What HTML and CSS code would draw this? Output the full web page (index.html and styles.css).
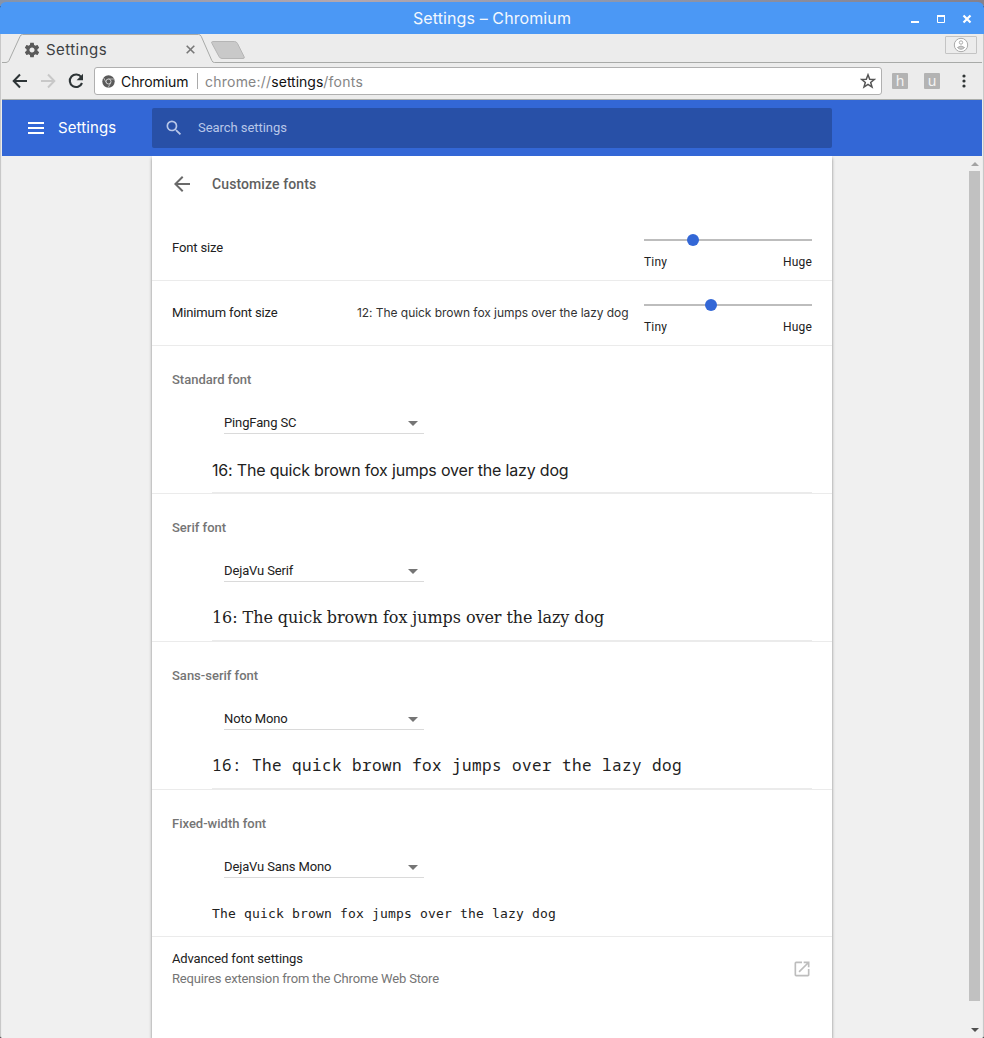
FILE: index.html
```html
<!DOCTYPE html>
<html lang="en">
<head>
<meta charset="utf-8">
<title>Settings – Chromium</title>
<link rel="stylesheet" href="styles.css">
</head>
<body>
<div class="desktop">
<div class="window">
  <div class="titlebar">
    <span class="window-title">Settings – Chromium</span>
    <svg class="window-buttons" width="76" height="32" viewBox="0 0 76 32">
      <path d="M3 20h8" stroke="#fff" stroke-width="2"/>
      <path d="M29.500 14v6.500h7V14M29 14h8" fill="none" stroke="#fff" stroke-width="1"/><path d="M29 14h8" stroke="#fff" stroke-width="2"/>
      <path d="M55.500 13.500l7 7m0-7l-7 7" stroke="#fff" stroke-width="2.200"/>
    </svg>
  </div>
  <div class="frame">
    <div class="tabstrip">
      <svg class="tab-shape" width="980" height="29" viewBox="0 0 980 29">
        <path d="M0 28.500h4q2 0 3-2L18 2.500q.7-2 2.500-2h176q2 0 2.800 2l10.500 24q.8 2 2.500 2H980" fill="none" stroke="#a8aaa8"/>
        <path d="M210.500 7.500h22q2 0 3 2l6.500 13q1 2-1 2h-21q-2 0-3-2l-7-13q-1-2 .5-2z" fill="#c9c9c9" stroke="#b5b5b5"/>
      </svg>
      <svg class="gear" width="16" height="16" viewBox="1 2 22 20"><path fill="#5a5a5a" d="M19.430 12.980c.04-.32.07-.64.07-.98s-.03-.66-.07-.98l2.110-1.650c.19-.15.24-.42.12-.64l-2-3.460c-.12-.22-.39-.3-.61-.22l-2.490 1c-.52-.4-1.080-.73-1.690-.98l-.38-2.650C14.460 2.180 14.250 2 14 2h-4c-.25 0-.46.18-.49.42l-.38 2.650c-.61.25-1.170.59-1.690.98l-2.490-1c-.23-.09-.49 0-.61.22l-2 3.460c-.13.22-.07.49.12.64l2.110 1.650c-.04.32-.07.65-.07.98s.03.66.07.98l-2.110 1.650c-.19.15-.24.42-.12.64l2 3.460c.12.22.39.3.61.22l2.490-1c.52.4 1.080.73 1.690.98l.38 2.650c.03.24.24.42.49.42h4c.25 0 .46-.18.49-.42l.38-2.650c.61-.25 1.170-.59 1.690-.98l2.490 1c.23.09.49 0 .61-.22l2-3.460c.12-.22.07-.49-.12-.64l-2.110-1.650zM12 15.500c-1.930 0-3.500-1.570-3.500-3.500s1.570-3.500 3.500-3.500 3.500 1.570 3.500 3.500-1.570 3.500-3.500 3.500z"/></svg>
      <span class="tab-title">Settings</span>
      <svg class="tab-close" width="9" height="9" viewBox="0 0 9 9"><path d="M.7.7l7.600 7.600m0-7.600L.7 8.300" stroke="#777" stroke-width="1.600"/></svg>
      <div class="profile"><svg width="16" height="16" viewBox="0 0 16 16" fill="#fff" stroke="#aaa"><circle cx="8" cy="8" r="6.700"/><circle cx="8" cy="5.500" r="1.700"/><path d="M4.500 10.500q3.500-3 7 0-3.500 3.500-7 0z" fill="#ccc"/></svg></div>
    </div>
    <div class="toolbar">
      <svg class="back" width="16" height="16" viewBox="0 0 16 16"><path d="M15 8H2M8 1.500L1.700 8 8 14.500" fill="none" stroke="#2d3436" stroke-width="2"/></svg>
      <svg class="forward" width="16" height="16" viewBox="0 0 16 16"><path d="M1 8h13M8 1.500L14.300 8 8 14.500" fill="none" stroke="#c8c8c8" stroke-width="2"/></svg>
      <svg class="reload" width="16" height="16" viewBox="0 0 16 16"><path d="M13.200 4A6.300 6.300 0 1 0 14 10" fill="none" stroke="#2d3436" stroke-width="2.100"/><path d="M15 .8v6.400H8.600z" fill="#2d3436"/></svg>
      <div class="omnibox">
        <svg class="chrome-icon" width="13" height="13" viewBox="0 0 13 13"><circle cx="6.500" cy="6.500" r="6.200" fill="#5a5a5a"/><circle cx="6.500" cy="6.500" r="2.500" fill="#5a5a5a" stroke="#ddd" stroke-width=".9"/><path d="M6.500 4h5.600M4.200 7.500L1.700 3M8.700 7.800l-2.700 5" stroke="#ccc" stroke-width=".8"/></svg>
        <span class="origin">Chromium</span>
        <span class="divider"></span>
        <span class="url">chrome://<b>settings</b>/fonts</span>
        <svg class="star" width="16" height="16" viewBox="0 0 16 16"><path d="M8 1.800l1.700 4.400 4.700.2-3.700 3 1.300 4.600L8 11.300 4 14l1.300-4.600-3.700-3 4.700-.2z" fill="none" stroke="#555" stroke-width="1.500"/></svg>
      </div>
      <span class="ext ext-h">h</span>
      <span class="ext ext-u">u</span>
      <svg class="kebab" width="4" height="14" viewBox="0 0 4 14" fill="#303535"><circle cx="2" cy="2" r="1.600"/><circle cx="2" cy="7" r="1.600"/><circle cx="2" cy="12" r="1.600"/></svg>
    </div>
    <header class="header">
      <svg class="menu" width="16" height="12" viewBox="0 0 16 12"><path d="M0 1h16M0 6h16M0 11h16" stroke="#fff" stroke-width="2"/></svg>
      <h1 class="app-title">Settings</h1>
      <div class="search">
        <svg width="20" height="20" viewBox="0 0 24 24"><path fill="#b8c7e9" d="M15.500 14h-.79l-.28-.27A6.470 6.470 0 0 0 16 9.500 6.500 6.500 0 1 0 9.500 16c1.610 0 3.090-.59 4.230-1.570l.27.28v.79l5 4.990L20.490 19l-4.990-5zm-6 0C7.010 14 5 11.990 5 9.500S7.010 5 9.500 5 14 7.010 14 9.500 11.990 14 9.500 14z"/></svg>
        <span>Search settings</span>
      </div>
    </header>
    <div class="viewport">
      <main class="card">
        <div class="subpage-head">
          <svg width="24" height="24" viewBox="0 0 24 24"><path fill="#6a6a6a" d="M20 11H7.830l5.590-5.590L12 4l-8 8 8 8 1.410-1.410L7.830 13H20v-2z"/></svg>
          <h2>Customize fonts</h2>
        </div>
        <div class="row">
          <span class="label">Font size</span>
          <div class="slider"><div class="track"><i class="knob" style="left:49px"></i></div><div class="ends"><span>Tiny</span><span>Huge</span></div></div>
        </div>
        <div class="row">
          <span class="label">Minimum font size</span>
          <span class="min-sample">12: The quick brown fox jumps over the lazy dog</span>
          <div class="slider"><div class="track"><i class="knob" style="left:67px"></i></div><div class="ends"><span>Tiny</span><span>Huge</span></div></div>
        </div>
        <section class="font">
          <h3>Standard font</h3>
          <div class="select"><span>PingFang SC</span><i class="caret"></i></div>
          <div class="sample standard"><span>16: The quick brown fox jumps over the lazy dog</span></div>
        </section>
        <section class="font">
          <h3>Serif font</h3>
          <div class="select"><span>DejaVu Serif</span><i class="caret"></i></div>
          <div class="sample serif"><span>16: The quick brown fox jumps over the lazy dog</span></div>
        </section>
        <section class="font">
          <h3>Sans-serif font</h3>
          <div class="select"><span>Noto Mono</span><i class="caret"></i></div>
          <div class="sample sans"><span>16: The quick brown fox jumps over the lazy dog</span></div>
        </section>
        <section class="font last">
          <h3>Fixed-width font</h3>
          <div class="select"><span>DejaVu Sans Mono</span><i class="caret"></i></div>
          <div class="sample fixed"><span>The quick brown fox jumps over the lazy dog</span></div>
        </section>
        <div class="advanced">
          <div><div>Advanced font settings</div><div class="secondary">Requires extension from the Chrome Web Store</div></div>
          <svg width="20" height="20" viewBox="0 0 24 24"><path fill="#bdbdbd" d="M19 19H5V5h7V3H5a2 2 0 0 0-2 2v14a2 2 0 0 0 2 2h14c1.100 0 2-.9 2-2v-7h-2v7zM14 3v2h3.590l-9.830 9.830 1.410 1.410L19 6.410V10h2V3h-7z"/></svg>
        </div>
      </main>
      <div class="scrollbar"><i class="up"></i><i class="thumb"></i><i class="down"></i></div>
    </div>
  </div>
</div>
</div>
</body>
</html>
```

FILE: styles.css
```css
* { box-sizing: border-box; }
body { margin: 0; font: 13px/20px Roboto, sans-serif; color: #212121; overflow: hidden; }
h1, h2, h3 { margin: 0; font-weight: 500; }
svg, i { display: block; flex: none; }
span { white-space: nowrap; }

.desktop { height: 1038px; padding-top: 2px; background: linear-gradient(90deg, #8593aa, #b5a7ad 35%, #8f98ae 60%, #85818d) top / 100% 6px no-repeat, #111; }
.window { height: 1036px; display: flex; flex-direction: column; }
.titlebar { height: 32px; background: #4b98f5; border-radius: 6px 6px 0 0; display: flex; align-items: center; padding-left: 413px; justify-content: space-between; }
.window-title { font: 16px/32px Inter, sans-serif; color: #fff; opacity: .93; letter-spacing: .1px; }
.frame { flex: 1; min-height: 0; background: #ececec; border: solid #c8c8c8; border-width: 0 1px; border-radius: 0 0 2px 2px; padding: 0 1px; display: flex; flex-direction: column; }

.tabstrip { height: 29px; position: relative; display: flex; align-items: center; padding: 2px 5px 0 22px; }
.tab-shape { position: absolute; left: 0; top: 0; }
.tab-title { margin-left: 6px; width: 138px; font: 15px/20px Inter, sans-serif; color: #3c4043; letter-spacing: .45px; }
.tab-close { margin-left: 2px; }
.profile { margin-left: auto; margin-top: -10px; width: 32px; height: 18px; border: 1px solid #c4c4c4; border-radius: 1px; display: flex; align-items: center; justify-content: center; }

.toolbar { height: 37px; border-bottom: 1px solid #aaadaa; display: flex; align-items: center; padding: 0 16px 0 10px; }
.forward, .reload { margin-left: 12px; }
.omnibox { margin-left: 10px; width: 788px; height: 28px; border: 1px solid #b0b0b0; border-radius: 3px; background: #fff; display: flex; align-items: center; padding: 0 5px 0 7px; font: 14px/20px Inter, sans-serif; }
.origin { margin-left: 6px; padding-top: 2px; width: 67px; color: #111; letter-spacing: -.1px; }
.divider { width: 1px; height: 16px; margin: 0 7px 0 9px; background: #aaa; }
.url { padding-top: 2px; color: #858585; letter-spacing: .23px; }
.url b { font-weight: 400; color: #111; letter-spacing: 0; }
.star { margin-left: auto; }
.ext { width: 16px; height: 16px; border-radius: 1px; background: #b3b3b3; color: #f3f3f3; font: 14px/16px "Noto Sans", sans-serif; text-align: center; }
.ext-h { margin-left: 10px; }
.ext-u { margin-left: 16px; }
.kebab { margin-left: auto; }

.header { height: 56px; background: #3367d6; display: flex; align-items: center; padding-left: 26px; }
.app-title { margin-left: 14px; width: 94px; font: 15px/20px Inter, sans-serif; color: #fff; letter-spacing: .1px; }
.search { width: 680px; height: 40px; border-radius: 2px; background: #2850a7; color: #b8c7e9; display: flex; align-items: center; gap: 14px; padding-left: 12px; letter-spacing: -.05px; }

.viewport { flex: 1; min-height: 0; background: #f0f0f0; display: flex; justify-content: space-between; padding-left: 150px; }
.card { width: 680px; background: #fff; box-shadow: 0 2px 3px rgba(0,0,0,.45); clip-path: inset(0 -8px 0 -8px); letter-spacing: -.13px; }
.subpage-head { height: 56px; padding-left: 18px; display: flex; align-items: center; gap: 18px; }
.subpage-head h2 { font-size: 14px; color: #5f5f5f; letter-spacing: .1px; }
.row { height: 65px; padding: 0 20px; display: flex; align-items: center; border-bottom: 1px solid #ebebeb; }
.subpage-head + .row { height: 69px; padding-top: 4px; }
.label { width: 105px; }
.slider { width: 168px; margin-left: auto; padding-top: 14px; }
.track { height: 2px; margin-bottom: 11px; background: #bdbdbd; position: relative; }
.knob { position: absolute; top: -5px; margin-left: -6px; width: 12px; height: 12px; border-radius: 50%; background: #3367d6; }
.ends { display: flex; justify-content: space-between; font-size: 12px; letter-spacing: .15px; }
.min-sample { margin-left: 80px; font: 12px/20px Inter, sans-serif; color: #333; letter-spacing: -.05px; }
.font { height: 148px; padding: 24px 20px 0; border-bottom: 1px solid #ebebeb; }
.font.last { height: 147px; }
.font h3 { font-size: 13px; color: #757575; letter-spacing: 0; }
.select { margin: 22px 0 0 52px; width: 200px; height: 22px; padding: 1px 6px 0 0; border-bottom: 1px solid #dadada; display: flex; justify-content: space-between; }
.caret { margin-top: 8px; border: 5px solid transparent; border-top-color: #757575; border-bottom: 0; }
.sample { margin-left: 40px; height: 59px; padding-top: 26px; border-bottom: 1px solid #ebebeb; }
.last .sample { border: 0; }
.standard { font: 16px/20px Inter, sans-serif; letter-spacing: -.19px; }
.serif { font: 16px/20px "DejaVu Serif", serif; letter-spacing: -.07px; }
.sans { font: 16px/20px "Noto Mono", "Noto Sans Mono", "DejaVu Sans Mono", monospace; letter-spacing: .4px; padding-top: 25px; }
.fixed { font: 13px/20px "DejaVu Sans Mono", monospace; letter-spacing: .174px; }
.advanced { padding: 12px 20px 0; display: flex; justify-content: space-between; align-items: center; }
.secondary { color: #757575; letter-spacing: -.15px; }
.scrollbar { width: 14px; padding: 6px 2px 6px 1px; display: flex; flex-direction: column; align-items: center; }
.up, .down { border: 4px solid transparent; }
.up { border-top: 0; border-bottom-color: #a3a3a3; }
.down { border-bottom: 0; border-top-color: #505050; margin-top: auto; }
.thumb { width: 11px; height: 830px; margin-top: 5px; background: #c1c1c1; }
```
